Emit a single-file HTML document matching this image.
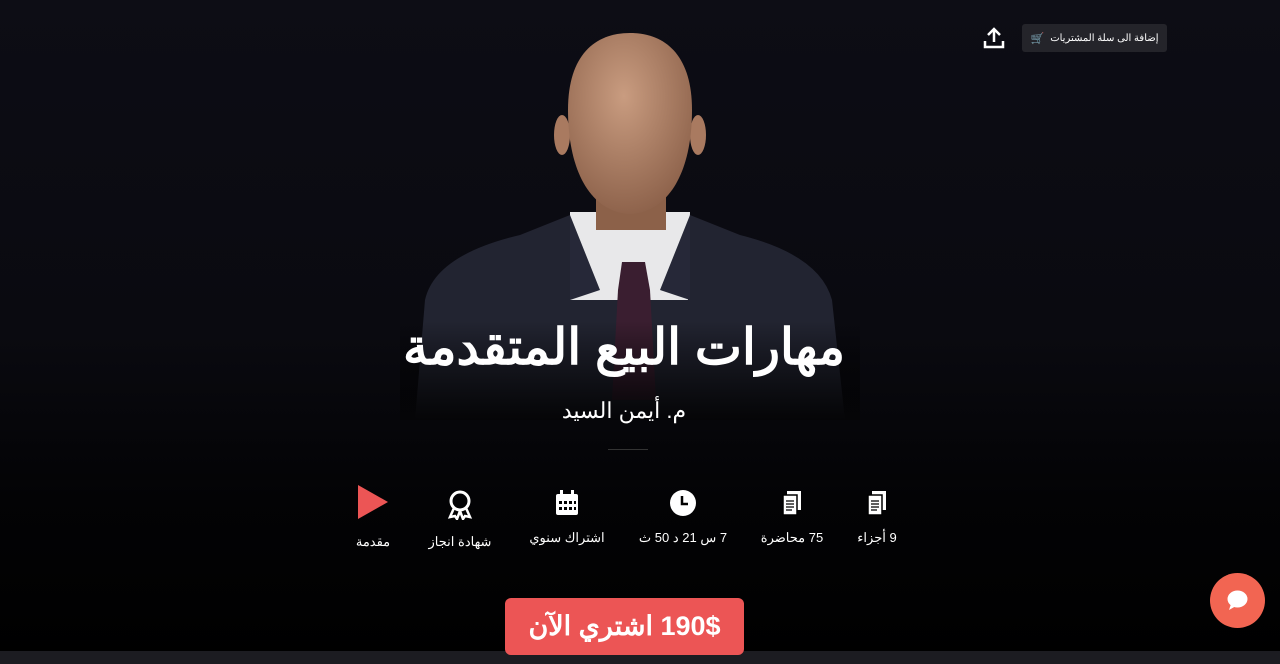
<!DOCTYPE html>
<html><head><meta charset="utf-8"><style>
*{margin:0;padding:0;box-sizing:border-box}
body{width:1280px;height:664px;overflow:hidden;background:linear-gradient(#0d0d15 0%,#0a0a10 50%,#030305 75%,#000 100%);font-family:"Liberation Sans","Noto Sans CJK SC",sans-serif;color:#fff;position:relative}
.abs{position:absolute}
.cart{left:1022px;top:24px;width:145px;height:28px;background:#24242a;border-radius:3px;font-size:10px;display:flex;align-items:center;justify-content:center;gap:6px;direction:rtl}
.title{left:0;width:1248px;top:318px;text-align:center;font-size:50px;font-weight:bold;direction:rtl}
.sub{left:0;width:1248px;top:398px;text-align:center;font-size:22px;direction:rtl}
.it{top:490px;width:120px;text-align:center;font-size:13px;direction:rtl}
.it svg{display:block;margin:0 auto 14px}
.buy{left:505px;top:598px;width:239px;height:57px;background:#ec5555;border-radius:6px;font-size:27px;font-weight:bold;display:flex;align-items:center;justify-content:center;direction:rtl;z-index:2}
.chat{left:1210px;top:573px;width:55px;height:55px;border-radius:50%;background:#f26552}
.bar{left:0;top:651px;width:1280px;height:13px;background:#1c1c21}
</style></head><body>
<svg class="abs" style="left:400px;top:20px" width="460" height="400" viewBox="400 20 460 400">
<defs>
<linearGradient id="fade" x1="0" y1="0" x2="0" y2="1"><stop offset="0.55" stop-color="#000" stop-opacity="0"/><stop offset="1" stop-color="#050507" stop-opacity="1"/></linearGradient>
<radialGradient id="skin" cx="0.45" cy="0.35" r="0.7"><stop offset="0" stop-color="#c99c80"/><stop offset="1" stop-color="#8a5f48"/></radialGradient>
</defs>
<path d="M425 300 Q435 255 520 235 L570 215 L690 215 L740 235 Q820 255 832 300 L845 420 L415 420 Z" fill="#222431"/>
<path d="M570 212 L690 212 L688 300 L570 300 Z" fill="#e8e8ea"/>
<path d="M570 215 L600 290 L570 300 Z M690 215 L660 290 L690 300 Z" fill="#262838"/>
<path d="M622 262 L645 262 L650 290 L656 400 L612 400 L618 290 Z" fill="#3a1e30"/>
<rect x="596" y="180" width="70" height="50" fill="#8c6149"/>
<ellipse cx="562" cy="135" rx="8" ry="20" fill="#a97a60"/>
<ellipse cx="698" cy="135" rx="8" ry="20" fill="#a97a60"/>
<path d="M630 33 C665 33 692 55 692 110 C692 170 670 212 630 214 C590 212 568 170 568 110 C568 55 595 33 630 33Z" fill="url(#skin)"/>
<rect x="400" y="200" width="460" height="220" fill="url(#fade)"/>
</svg>
<div class="abs cart"><span>إضافة الى سلة المشتريات</span><span style="font-size:11px">🛒</span></div>
<svg class="abs" style="left:983px;top:26px" width="22" height="24" viewBox="0 0 22 24"><path d="M11 16V3M5 9l6-6 6 6M2 15v6h18v-6" fill="none" stroke="#fff" stroke-width="2.5"/></svg>
<div class="abs title">مهارات البيع المتقدمة</div>
<div class="abs sub">م. أيمن السيد</div>
<div class="abs" style="left:608px;top:449px;width:40px;height:1px;background:#333"></div>
<div class="abs it" style="left:817px"><svg width="22" height="26" viewBox="0 0 22 26"><rect x="6" y="1" width="14" height="19" fill="#fff"/><rect x="2" y="5" width="14" height="20" fill="#fff" stroke="#000" stroke-width="1.5"/><path d="M5 11h8M5 14h8M5 17h8M5 20h6" stroke="#000" stroke-width="1.3"/></svg>9 أجزاء</div>
<div class="abs it" style="left:732px"><svg width="22" height="26" viewBox="0 0 22 26"><rect x="6" y="1" width="14" height="19" fill="#fff"/><rect x="2" y="5" width="14" height="20" fill="#fff" stroke="#000" stroke-width="1.5"/><path d="M5 11h8M5 14h8M5 17h8M5 20h6" stroke="#000" stroke-width="1.3"/></svg>75 محاضرة</div>
<div class="abs it" style="left:623px"><svg width="26" height="26" viewBox="0 0 26 26"><circle cx="13" cy="13" r="13" fill="#fff"/><path d="M12 6v8h6" fill="none" stroke="#000" stroke-width="2.5"/></svg>7 س 21 د 50 ث</div>
<div class="abs it" style="left:507px"><svg width="24" height="26" viewBox="0 0 24 26"><rect x="1" y="4" width="22" height="21" rx="2" fill="#fff"/><rect x="5" y="0" width="3" height="6" fill="#fff"/><rect x="16" y="0" width="3" height="6" fill="#fff"/><g fill="#000"><rect x="4" y="11" width="3" height="3"/><rect x="9" y="11" width="3" height="3"/><rect x="14" y="11" width="3" height="3"/><rect x="19" y="11" width="2" height="3"/><rect x="4" y="17" width="3" height="3"/><rect x="9" y="17" width="3" height="3"/><rect x="14" y="17" width="3" height="3"/><rect x="19" y="17" width="2" height="3"/></g></svg>اشتراك سنوي</div>
<div class="abs it" style="left:400px"><svg width="28" height="30" viewBox="0 0 28 30"><circle cx="14" cy="11" r="9" fill="none" stroke="#fff" stroke-width="3"/><path d="M8 18L4 27l5-1 2 3 3-8M20 18l4 9-5-1-2 3-3-8" fill="none" stroke="#fff" stroke-width="2.5"/></svg>شهادة انجاز</div>
<div class="abs it" style="left:313px;top:484px"><svg width="34" height="36" viewBox="0 0 34 36"><path d="M2 1L32 18 2 35Z" fill="#ec5555"/></svg>مقدمة</div>
<div class="abs buy">190$ اشتري الآن</div>
<div class="abs chat"><svg width="55" height="55" viewBox="0 0 55 55"><ellipse cx="27.5" cy="26" rx="10" ry="8.5" fill="#fff"/><path d="M21 31l-2 6 7-4Z" fill="#fff"/></svg></div>
<div class="abs bar"></div>
</body></html>
